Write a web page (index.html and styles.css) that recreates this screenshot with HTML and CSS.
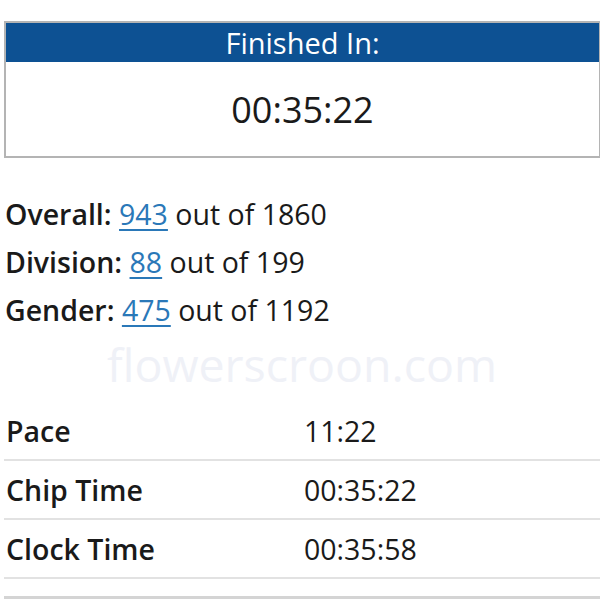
FILE: index.html
```html
<!DOCTYPE html>
<html lang="en">
<head>
  <meta charset="UTF-8" />
  <meta name="viewport" content="width=device-width, initial-scale=1.0"/>
  <title>Race Result</title>
  <link rel="stylesheet" href="styles.css">
</head>
<body>
  <div class="finish-box">
    <div class="finish-title">Finished In:</div>
    <div class="finish-time">00:35:22</div>
  </div>

  <div class="ranks">
    <div class="rank"><span class="rank-label">Overall:</span> <a href="#">943</a> out of 1860</div>
    <div class="rank"><span class="rank-label">Division:</span> <a href="#">88</a> out of 199</div>
    <div class="rank"><span class="rank-label">Gender:</span> <a href="#">475</a> out of 1192</div>
  </div>

  <div class="watermark">flowerscroon.com</div>

  <table class="splits">
    <tr><td class="split-label">Pace</td><td>11:22</td></tr>
    <tr><td class="split-label">Chip Time</td><td>00:35:22</td></tr>
    <tr><td class="split-label">Clock Time</td><td>00:35:58</td></tr>
  </table>

  <div class="next-section"></div>
</body>
</html>
```

FILE: styles.css
```css
body {
  margin: 0;
  padding: 21px 0 0 4px;
  font-family: "Open Sans", "Noto Sans", sans-serif;
  color: #1a1a1a;
  background: #fff;
  overflow: hidden;
}
.finish-box {
  border: 2px solid #b4b4b4;
  border-right-width: 1px;
}
.finish-title {
  height: 39px;
  line-height: 39px;
  background: #0d5193;
  color: #fff;
  font-size: 29px;
  text-align: center;
}
.finish-time {
  height: 94px;
  display: flex;
  align-items: center;
  justify-content: center;
  font-size: 36px;
  font-weight: 500;
}
.ranks {
  margin-top: 32px;
}
.rank {
  height: 48px;
  line-height: 48px;
  font-size: 28.5px;
  padding-left: 1px;
}
.rank-label {
  font-weight: 600;
}
.rank a {
  color: #2a78b8;
  text-decoration: underline;
  text-decoration-thickness: 2px;
  text-underline-offset: 4px;
}
.watermark {
  height: 52px;
  line-height: 52px;
  margin-top: 4px;
  text-align: center;
  font-size: 46.5px;
  color: #eff1f7;
}
.splits {
  width: 100%;
  margin-top: 12px;
  border-collapse: collapse;
  font-size: 28.5px;
}
.splits td {
  width: 50%;
  height: 57px;
  padding: 0 2px;
  border-bottom: 2px solid #e2e2e2;
}
.split-label {
  font-weight: 600;
}
.next-section {
  margin-top: 17px;
  border-top: 3px solid #d4d4d4;
  height: 20px;
}
```
